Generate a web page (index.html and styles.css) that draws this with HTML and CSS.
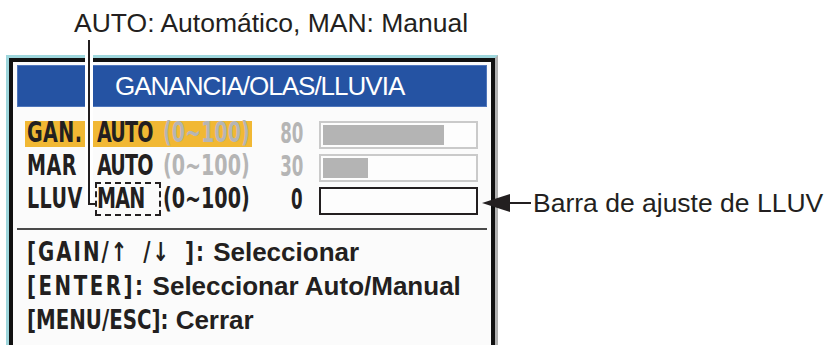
FILE: index.html
```html
<!DOCTYPE html>
<html lang="es">
<head>
  <meta charset="UTF-8">
  <title>GANANCIA/OLAS/LLUVIA</title>
  <link rel="stylesheet" href="styles.css">
</head>
<body>
  <p class="caption">AUTO: Automático, MAN: Manual</p>

  <div class="screen">
    <div class="frame">
      <div class="title">GANANCIA/OLAS/LLUVIA</div>

      <div class="rows">
        <div class="row">
          <div class="hl on">
            <span class="lbl"><span class="t">GAN.</span></span>
            <span class="mode"><span class="t">AUTO</span></span>
            <span class="range dim"><span class="t">(0~100)</span></span>
          </div>
          <span class="val dim"><span class="t">80</span></span>
          <div class="bar"><div class="fill" style="width: 80%"></div></div>
        </div>
        <div class="row">
          <div class="hl">
            <span class="lbl"><span class="t">MAR</span></span>
            <span class="mode"><span class="t">AUTO</span></span>
            <span class="range dim"><span class="t">(0~100)</span></span>
          </div>
          <span class="val dim"><span class="t">30</span></span>
          <div class="bar"><div class="fill" style="width: 30%"></div></div>
        </div>
        <div class="row">
          <div class="hl">
            <span class="lbl"><span class="t">LLUV</span></span>
            <span class="mode boxed"><span class="t">MAN</span></span>
            <span class="range"><span class="t">(0~100)</span></span>
          </div>
          <span class="val"><span class="t">0</span></span>
          <div class="bar active"></div>
        </div>
      </div>

      <div class="keys">
        <div><span class="key wide">[GAIN/↑ /↓ ]:</span> Seleccionar</div>
        <div><span class="key loose">[ENTER]:</span> Seleccionar Auto/Manual</div>
        <div><span class="key tight">[MENU/ESC]:</span> Cerrar</div>
      </div>
    </div>
  </div>

  <!-- callouts -->
  <div class="pointer"></div>
  <div class="callout">
    <svg width="50" height="20" viewBox="0 0 50 20">
      <polygon points="1,10 29,1 29,19" fill="#231f20"/>
      <rect x="28" y="9" width="22" height="2" fill="#231f20"/>
    </svg>
    <span>Barra de ajuste de LLUV</span>
  </div>
</body>
</html>
```

FILE: styles.css
```css
:root {
  --ink: #231f20;
  --dim: #b5b5b5;
  --blue: #2553a3;
  --gold: #f1b834;
  --cyan: #9ed6dc;
  --cond: "DejaVu Sans Condensed", "DejaVu Sans", sans-serif;
}
body {
  margin: 0;
  background: #fff;
  color: var(--ink);
  font-family: "Liberation Sans", Arial, sans-serif;
  position: relative;
  height: 345px;
  overflow: hidden;
}
.caption {
  margin: 8px 0 0;
  padding-left: 74px;
  font-size: 26.5px;
  line-height: 30px;
}
.screen {
  margin: 17px 0 0 6px;
  width: 486px;
  border-top: 3px solid var(--cyan);
  border-left: 3px solid var(--cyan);
  border-right: 3px solid #b0b0b0;
}
.frame {
  box-sizing: border-box;
  height: 287px;
  border: 4px solid #111;
  border-bottom: none;
  padding: 3px 4px 0;
  background: #fbfbfb;
}
.title {
  background: var(--blue);
  box-shadow: inset 0 0 0 1px #4f76bb;
  color: #fff;
  height: 42px;
  line-height: 42px;
  font-size: 26px;
  letter-spacing: -1px;
  padding-left: 98px;
}

/* setting rows */
.rows {
  margin-top: 14px;
  padding-left: 8px;
  display: flex;
  flex-direction: column;
  gap: 5px;
  font-family: var(--cond);
  font-weight: bold;
  font-size: 25px;
}
.row {
  display: flex;
  align-items: flex-start;
  height: 28px;
}
.hl {
  display: flex;
  height: 26px;
  line-height: 26px;
}
.hl.on {
  background: var(--gold);
}
.t {
  display: inline-block;
  transform: scale(0.85, 1.1);
  transform-origin: left 72%;
}
.lbl {
  width: 65px;
  padding-left: 2px;
}
.lbl .t {
  letter-spacing: 0.5px;
}
.mode {
  width: 63px;
  padding-left: 5px;
}
.mode .t {
  letter-spacing: -1px;
}
.boxed {
  position: relative;
}
.boxed::after {
  content: "";
  position: absolute;
  left: 3px;
  right: -1px;
  top: -5px;
  bottom: -3px;
  border: 2px dashed var(--ink);
}
.range {
  width: 89px;
  padding-left: 3px;
}
.val {
  width: 51px;
  text-align: right;
  line-height: 28px;
}
.val .t {
  transform: scale(0.74, 1.1);
  transform-origin: right 72%;
}
.dim {
  color: var(--dim);
}
.bar {
  margin-left: 16px;
  width: 159px;
  height: 28px;
  box-sizing: border-box;
  border: 2px solid #cacaca;
  padding: 2px;
  background: #fdfdfd;
}
.bar.active {
  border-color: var(--ink);
}
.fill {
  height: 100%;
  background: #b4b4b4;
}

/* key help */
.keys {
  margin-top: 13px;
  border-top: 2px solid #4a4a4a;
  padding: 6px 0 0 10px;
  font-size: 26px;
  font-weight: bold;
  line-height: 33px;
}
.key {
  display: inline-block;
  font-family: var(--cond);
  font-size: 22px;
  letter-spacing: 1px;
  transform: scaleY(1.18);
  transform-origin: center 70%;
}
.key.wide {
  letter-spacing: 2px;
  word-spacing: 5px;
}
.key.loose {
  letter-spacing: 2.5px;
}
.key.tight {
  letter-spacing: 0;
}

/* callouts */
.pointer {
  position: absolute;
  left: 85px;
  top: 40px;
  width: 2px;
  height: 165px;
  background: var(--ink);
  border: 0 solid #fff;
  border-width: 0 3px;
}
.pointer::after {
  content: "";
  position: absolute;
  left: 0;
  bottom: 0;
  width: 8px;
  height: 2px;
  background: var(--ink);
}
.callout {
  position: absolute;
  left: 481px;
  top: 188px;
  display: flex;
  align-items: center;
  gap: 2px;
  height: 30px;
  font-size: 26.5px;
  line-height: 30px;
}
.callout svg {
  display: block;
}
```
